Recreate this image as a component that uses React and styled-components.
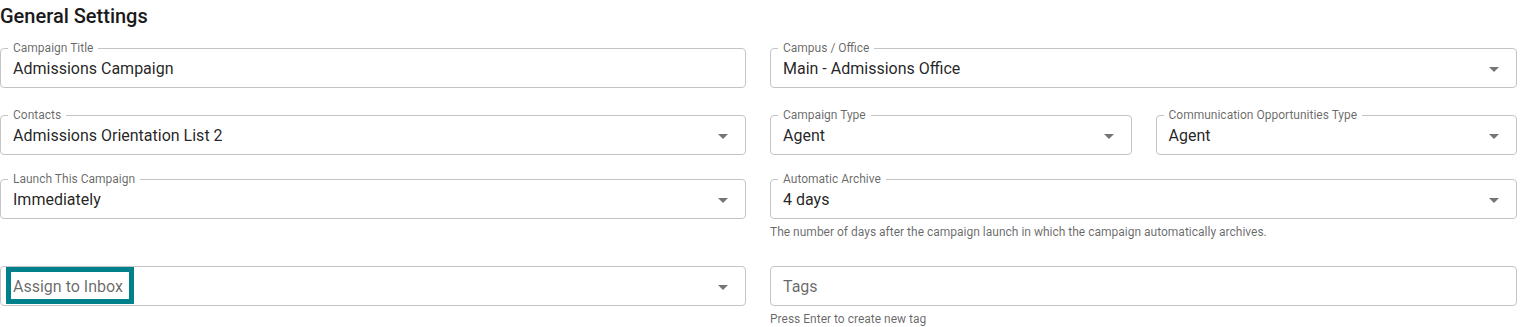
import styled, { createGlobalStyle } from 'styled-components';

const Global = createGlobalStyle`
  body {
    margin: 0;
    background: #fff;
    font-family: Roboto, "Noto Sans", Arial, sans-serif;
  }
`;

const Page = styled.div`
  padding: 0 8px 0 0;
  width: 1517px;
`;

const Title = styled.h2`
  margin: 0 0 16px;
  font-size: 20px;
  line-height: 32px;
  font-weight: 500;
  color: #1a1a1a;
`;

const FormGrid = styled.div`
  display: grid;
  grid-template-columns: 746px 1fr;
  column-gap: 24px;
  row-gap: 24px;
  align-items: start;
`;

const Split = styled.div`
  display: grid;
  grid-template-columns: 1fr 1fr;
  column-gap: 24px;
  align-items: start;
`;

const Field = styled.div`
  display: flex;
  flex-direction: column;
  margin-bottom: ${(p) => (p.$extra ? `${p.$extra}px` : '0')};
`;

const Box = styled.div`
  position: relative;
  box-sizing: border-box;
  height: 40px;
  border: 1px solid #c4c4c4;
  border-radius: 4px;
  display: flex;
  align-items: center;
  padding: 2px 10px 0 12px;
`;

const Label = styled.span`
  position: absolute;
  top: -8px;
  left: 7px;
  padding: 0 5px;
  background: #fff;
  font-size: 12px;
  line-height: 15px;
  color: rgba(0, 0, 0, 0.6);
  white-space: nowrap;
`;

const Value = styled.span`
  flex: 1;
  font-size: 16px;
  line-height: 20px;
  color: ${(p) => (p.$placeholder ? 'rgba(0, 0, 0, 0.6)' : 'rgba(0, 0, 0, 0.87)')};
`;

const Helper = styled.p`
  margin: 4px 0 0;
  font-size: 12px;
  line-height: 19px;
  color: rgba(0, 0, 0, 0.6);
`;

const Highlight = styled.div`
  position: absolute;
  left: 5px;
  top: 0;
  width: 128px;
  height: 37px;
  box-sizing: border-box;
  border: 5px solid #00808a;
  pointer-events: none;
`;

const Arrow = () => (
  <svg width="24" height="24" viewBox="0 0 24 24" fill="rgba(0,0,0,0.54)">
    <path d="M7 10l5 5 5-5z" />
  </svg>
);

function TextField({ label, value, placeholder, select, helper, extra, highlight }) {
  return (
    <Field $extra={extra}>
      <Box>
        {label && <Label>{label}</Label>}
        <Value $placeholder={!value}>{value || placeholder}</Value>
        {select && <Arrow />}
        {highlight && <Highlight />}
      </Box>
      {helper && <Helper>{helper}</Helper>}
    </Field>
  );
}

export default function App() {
  return (
    <Page>
      <Global />
      <Title>General Settings</Title>
      <FormGrid>
        <TextField label="Campaign Title" value="Admissions Campaign" extra={3} />
        <TextField label="Campus / Office" value="Main - Admissions Office" select extra={3} />

        <TextField label="Contacts" value="Admissions Orientation List 2" select />
        <Split>
          <TextField label="Campaign Type" value="Agent" select />
          <TextField label="Communication Opportunities Type" value="Agent" select />
        </Split>

        <TextField label="Launch This Campaign" value="Immediately" select />
        <TextField
          label="Automatic Archive"
          value="4 days"
          select
          helper="The number of days after the campaign launch in which the campaign automatically archives."
        />

        <TextField placeholder="Assign to Inbox" select highlight />
        <TextField placeholder="Tags" helper="Press Enter to create new tag" />
      </FormGrid>
    </Page>
  );
}
